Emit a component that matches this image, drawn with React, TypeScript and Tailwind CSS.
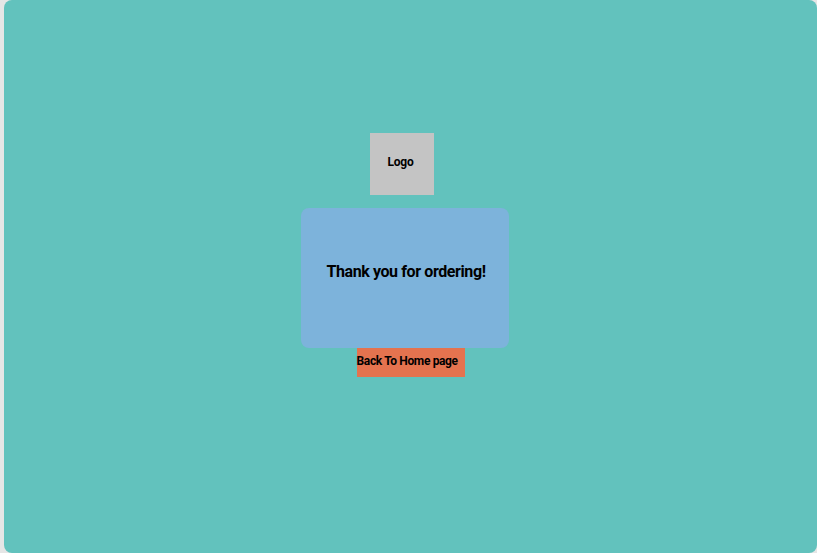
export default function App() {
  return (
    <div className="w-[817px] h-[553px] bg-[#e6e6e6] pl-[4px] overflow-hidden" style={{ fontFamily: 'Roboto, "Liberation Sans", sans-serif' }}>
      <div className="w-full h-full bg-[#62c2bd] rounded-[8px] flex flex-col items-center pt-[133px]">
        <div className="w-[64px] h-[62px] bg-[#c4c4c4] flex items-center justify-center mr-[17px]">
          <span className="text-[12px] font-bold text-black leading-none mr-[3px] mb-[5px] tracking-[-0.2px]">Logo</span>
        </div>
        <div className="mt-[13px] w-[208px] h-[140px] bg-[#7db3db] rounded-[8px] flex items-center justify-center mr-[11px]">
          <span className="text-[16px] font-bold text-black leading-none mt-[-12px] ml-[2px] tracking-[-0.4px]">Thank you for ordering!</span>
        </div>
        <button className="w-[108px] h-[29px] bg-[#e4734f] text-left text-[12px] font-bold text-black leading-none pb-[4px] whitespace-nowrap tracking-[-0.35px]">
          Back To Home page
        </button>
      </div>
    </div>
  );
}
